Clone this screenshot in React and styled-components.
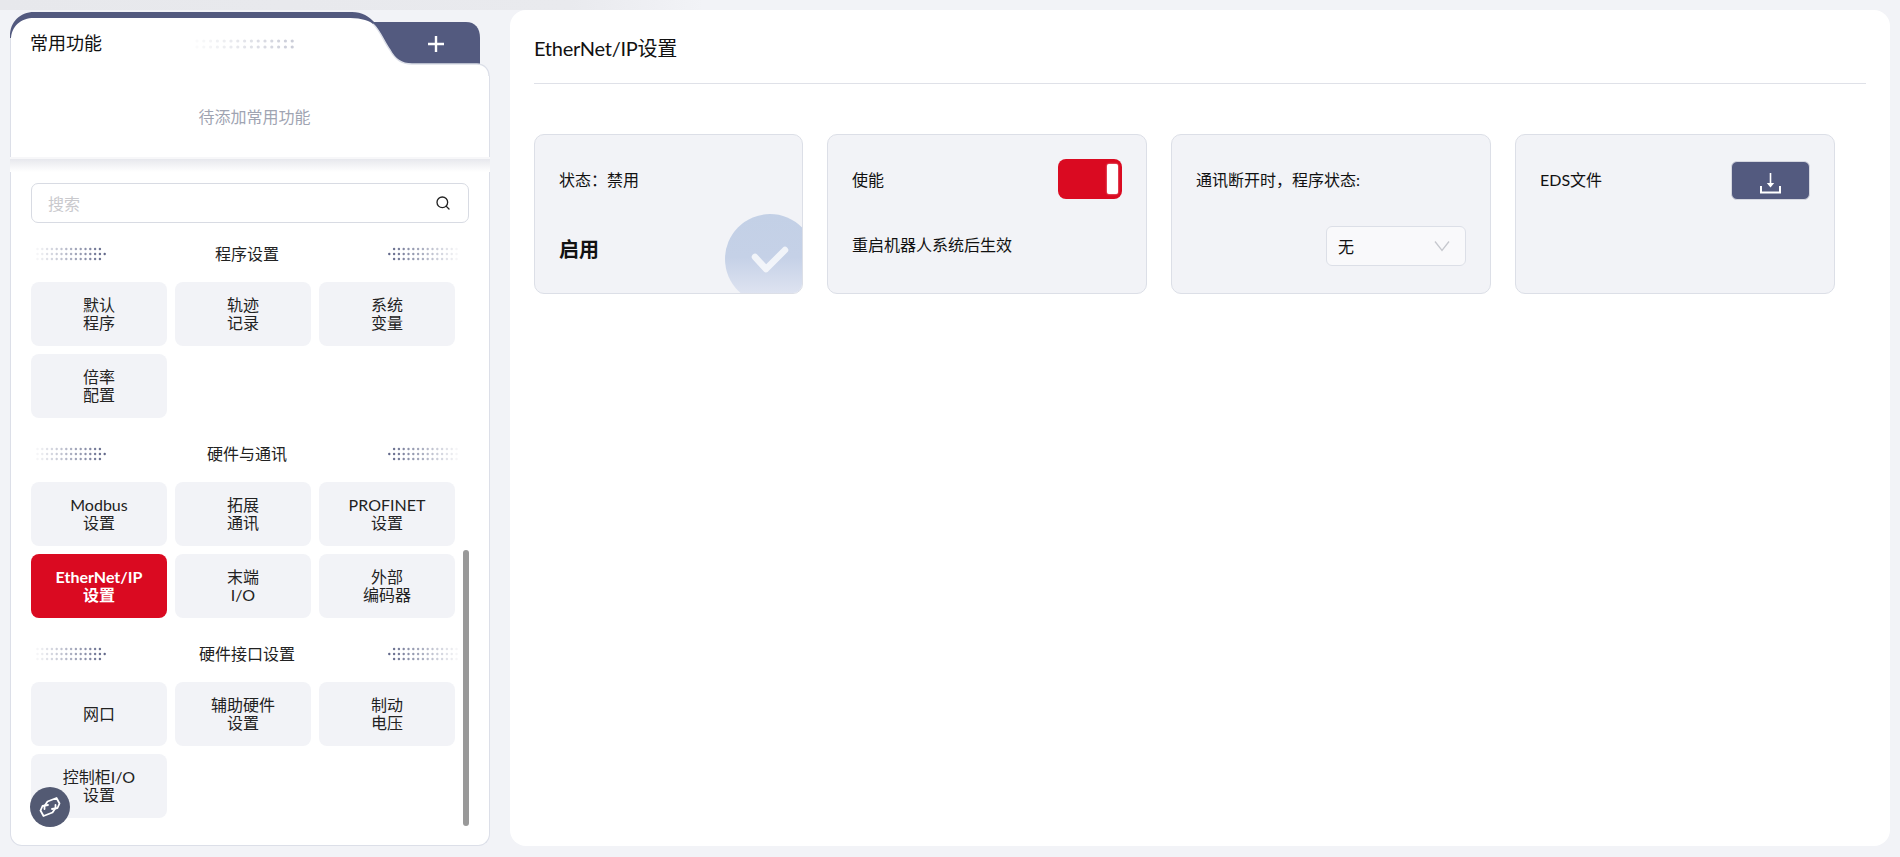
import React from "react";
import styled, { createGlobalStyle } from "styled-components";
import { Search } from "lucide-react";

const GlobalStyle = createGlobalStyle`
  html, body { margin: 0; padding: 0; background: #f2f3f7; }
  body { font-family: Lato, "Noto Sans CJK SC", sans-serif; color: #1b1b1f; }
  * { box-sizing: border-box; }
`;

const sections = [
  {
    title: "程序设置",
    items: [["默认", "程序"], ["轨迹", "记录"], ["系统", "变量"], ["倍率", "配置"]],
  },
  {
    title: "硬件与通讯",
    items: [
      ["Modbus", "设置"],
      ["拓展", "通讯"],
      ["PROFINET", "设置"],
      ["EtherNet/IP", "设置"],
      ["末端", "I/O"],
      ["外部", "编码器"],
    ],
  },
  {
    title: "硬件接口设置",
    items: [["网口"], ["辅助硬件", "设置"], ["制动", "电压"], ["控制柜I/O", "设置"]],
  },
];

const DotStrip = ({ mirror }) => {
  const dots = [];
  [250, 255, 260].forEach((y, row) => {
    const cols = row === 1 ? 15 : 14;
    for (let i = 0; i < cols; i++) {
      dots.push(
        <circle key={row + "-" + i} cx={1.5 + i * 4.8} cy={y - 248} r="1.2" fill="#535a7f" opacity={0.06 + (i / 14) * 0.85} />
      );
    }
  });
  return (
    <DotSvg $mirror={mirror} width="70" height="14" viewBox="0 0 70 14">
      {dots}
    </DotSvg>
  );
};

const TabDots = () => {
  const dots = [];
  [3, 9].forEach((y, row) => {
    for (let i = 0; i < 15; i++) {
      dots.push(<circle key={row + "-" + i} cx={2 + i * 6.8} cy={y} r="1.6" fill="#535a7f" opacity={0.03 + (i / 14) * 0.27} />);
    }
  });
  return (
    <TabDotSvg width="100" height="12" viewBox="0 0 100 12">
      {dots}
    </TabDotSvg>
  );
};

const TabShape = () => (
  <TabSvg width="480" height="64" viewBox="0 0 480 64">
    <path d="M350 10H456C465 10 470 16 470 26V56H350Z" fill="#535a7f" />
    <path d="M0 64V24C0 10 10 0 24 0H342C352 0 359 4 366 12L380 40H20Z" fill="#535a7f" />
    <path
      d="M1 64V28C1 14 11 6 24 6H336C348 6 357 7 363 12C370 18 374 30 380 38C385 47 391 52 402 52H467C474 52 479 57 479 64Z"
      fill="#fff"
    />
    <path
      d="M363 12C370 18 374 30 380 38C385 47 391 52 402 52H467C474 52 479 57 479 64"
      fill="none"
      stroke="#dcdfe8"
      strokeWidth="1.4"
    />
    <path d="M0.5 26V64" stroke="#dcdfe8" />
  </TabSvg>
);

const SectionBlock = ({ section }) => (
  <Section>
    <SectionHead>
      <DotStrip />
      <SectionTitle>{section.title}</SectionTitle>
      <DotStrip mirror />
    </SectionHead>
    <ButtonGrid>
      {section.items.map((lines) => (
        <NavButton key={lines.join("")} $active={lines[0] === "EtherNet/IP"}>
          {lines.map((line) => (
            <span key={line}>{line}</span>
          ))}
        </NavButton>
      ))}
    </ButtonGrid>
  </Section>
);

export default function App() {
  return (
    <>
      <GlobalStyle />
      <TopStrip />
      <Page>
        <Sidebar>
          <TabHeader>
            <TabShape />
            <TabLabel>常用功能</TabLabel>
            <TabDots />
            <AddButton>
              <svg width="18" height="18" viewBox="0 0 18 18">
                <path d="M9 1V17M1 9H17" stroke="#fff" strokeWidth="2.4" />
              </svg>
            </AddButton>
          </TabHeader>
          <FavBody>待添加常用功能</FavBody>
          <Shade />
          <SearchBox>
            <SearchHint>搜索</SearchHint>
            <Search size={16} color="#222" strokeWidth={2} />
          </SearchBox>
          {sections.map((s) => (
            <SectionBlock key={s.title} section={s} />
          ))}
          <ScrollThumb />
          <RoundButton>
            <svg width="24" height="24" viewBox="0 0 24 24" fill="none" stroke="#fff" strokeWidth="1.8" strokeLinejoin="round" strokeLinecap="round">
              <path d="M6.5 14V11L9.5 6.5L18.5 3L21.5 8.5L19.5 13L14 14" />
              <path d="M17.5 10V13L14.5 17.5L5.5 21L2.5 15.5L4.5 11L10 10" />
            </svg>
          </RoundButton>
        </Sidebar>
        <Main>
          <PageTitle>EtherNet/IP设置</PageTitle>
          <Cards>
            <Card $width={269}>
              <CardRow>
                <span>状态：禁用</span>
              </CardRow>
              <BigStatus>启用</BigStatus>
              <StatusBadge>
                <svg width="38" height="30" viewBox="0 0 38 30">
                  <path d="M4 12L15 24L34 5" fill="none" stroke="#fff" strokeOpacity="0.75" strokeWidth="6.5" strokeLinecap="round" strokeLinejoin="round" />
                </svg>
              </StatusBadge>
            </Card>
            <Card>
              <CardRow>
                <span>使能</span>
                <Toggle>
                  <Knob />
                </Toggle>
              </CardRow>
              <CardNote>重启机器人系统后生效</CardNote>
            </Card>
            <Card>
              <CardRow>
                <span>通讯断开时，程序状态:</span>
              </CardRow>
              <SelectRow>
                <SelectBox>
                  <span>无</span>
                  <svg width="16" height="12" viewBox="0 0 16 12">
                    <path d="M1 1.5L8 10.5L15 1.5" fill="none" stroke="#c6c8ce" strokeWidth="1.3" />
                  </svg>
                </SelectBox>
              </SelectRow>
            </Card>
            <Card>
              <CardRow>
                <span>EDS文件</span>
                <DownloadButton>
                  <svg width="21" height="21" viewBox="0 0 21 21" fill="none">
                    <path d="M10.5 0V11" stroke="#fff" strokeWidth="1.6" />
                    <path d="M6.8 10H14.2L10.5 14.5Z" fill="#fff" />
                    <path d="M1 13V19.5H20V13" stroke="#fff" strokeWidth="2" />
                  </svg>
                </DownloadButton>
              </CardRow>
            </Card>
          </Cards>
        </Main>
      </Page>
    </>
  );
}

const TopStrip = styled.div`
  height: 10px;
  background: linear-gradient(90deg, #e7e8ec 0%, #e9eaee 30%, #f2f3f7 37%);
`;

const Page = styled.div`
  display: flex;
  align-items: flex-start;
  gap: 20px;
  padding: 0 10px;
  height: 846px;
  overflow: hidden;
`;

const Sidebar = styled.aside`
  position: relative;
  flex: 0 0 480px;
  height: 834px;
  margin-top: 2px;
  display: flex;
  flex-direction: column;
  background: #fff;
  border-radius: 14px 12px 12px 12px;
  background-clip: padding-box;
  border: 1px solid #dcdfe8;
  border-top: none;
`;

const TabHeader = styled.div`
  position: relative;
  flex: 0 0 64px;
  margin: 0 -1px;
  padding: 10px 45px 12px 20px;
  display: flex;
  align-items: center;
  background: #f2f3f7;
`;

const TabSvg = styled.svg`
  position: absolute;
  left: 0;
  top: 0;
`;

const TabLabel = styled.div`
  position: relative;
  font-size: 18px;
  line-height: 24px;
  color: #111;
`;

const TabDotSvg = styled.svg`
  position: relative;
  margin-left: 93px;
  margin-top: 2px;
`;

const AddButton = styled.div`
  position: relative;
  margin-left: auto;
  display: flex;
  margin-top: 2px;
`;

const FavBody = styled.div`
  flex: 0 0 81px;
  padding: 0 0 1px 9px;
  display: flex;
  align-items: center;
  justify-content: center;
  font-size: 16px;
  color: #a0a4b2;
`;

const Shade = styled.div`
  flex: 0 0 15px;
  margin: 0 -1px;
  border-top: 2px solid #f7f7f9;
  background: linear-gradient(180deg, #e7e8ed 0%, #fff 100%);
`;

const SearchBox = styled.div`
  flex: 0 0 40px;
  width: 438px;
  margin: 11px 0 0 20px;
  padding: 0 17px 0 16px;
  display: flex;
  align-items: center;
  justify-content: space-between;
  border: 1px solid #d8dbe3;
  border-radius: 7px;
`;

const SearchHint = styled.span`
  font-size: 16px;
  color: #c9c9cd;
`;

const Section = styled.section`
  margin: 24px 0 0 20px;
  &:first-of-type {
    margin-top: 19px;
  }
`;

const SectionHead = styled.div`
  width: 432px;
  height: 24px;
  padding: 0 5px;
  display: flex;
  align-items: center;
  justify-content: space-between;
`;

const DotSvg = styled.svg`
  transform: ${(p) => (p.$mirror ? "scaleX(-1)" : "none")};
`;

const SectionTitle = styled.div`
  font-size: 16px;
  line-height: 24px;
  color: #222;
`;

const ButtonGrid = styled.div`
  margin-top: 16px;
  display: grid;
  grid-template-columns: repeat(3, 136px);
  grid-auto-rows: 64px;
  gap: 8px;
`;

const NavButton = styled.div`
  display: flex;
  flex-direction: column;
  align-items: center;
  justify-content: center;
  border-radius: 8px;
  font-size: 16px;
  line-height: 18px;
  background: ${(p) => (p.$active ? "#da0a21" : "#f2f3f7")};
  color: ${(p) => (p.$active ? "#fff" : "#222")};
  font-weight: ${(p) => (p.$active ? 700 : 400)};
`;

const ScrollThumb = styled.div`
  position: absolute;
  left: 452px;
  top: 538px;
  width: 6px;
  height: 276px;
  border-radius: 3px;
  background: #999;
`;

const RoundButton = styled.div`
  position: absolute;
  left: 19px;
  top: 775px;
  width: 40px;
  height: 40px;
  border-radius: 50%;
  background: #535a73;
  display: flex;
  align-items: center;
  justify-content: center;
`;

const Main = styled.main`
  flex: 1;
  height: 836px;
  padding: 0 24px 0 24px;
  background: #fff;
  border-radius: 16px;
`;

const PageTitle = styled.h1`
  margin: 0;
  height: 74px;
  padding-top: 24px;
  font-size: 20px;
  line-height: 28px;
  font-weight: 400;
  letter-spacing: -0.25px;
  color: #111;
  border-bottom: 1px solid #dfe1e8;
`;

const Cards = styled.div`
  margin-top: 50px;
  display: flex;
  gap: 24px;
`;

const Card = styled.div`
  position: relative;
  overflow: hidden;
  flex: 0 0 ${(p) => p.$width || 320}px;
  height: 160px;
  padding: 24px 24px 0 24px;
  background: #f2f3f7;
  border: 1px solid #dcdfe7;
  border-radius: 10px;
  font-size: 16px;
`;

const CardRow = styled.div`
  height: 40px;
  display: flex;
  align-items: center;
  justify-content: space-between;
  color: #111;
`;

const BigStatus = styled.div`
  margin-top: 36px;
  font-size: 20px;
  line-height: 28px;
  font-weight: 700;
  color: #111;
`;

const StatusBadge = styled.div`
  position: absolute;
  left: 190px;
  top: 79px;
  width: 90px;
  height: 90px;
  border-radius: 50%;
  padding-top: 31px;
  padding-left: 26px;
  background: linear-gradient(180deg, #c3d0e6 0%, #c5d1e7 48%, #e2e6f2 95%);
`;

const Toggle = styled.div`
  width: 64px;
  height: 40px;
  padding: 5px 4px 5px 5px;
  display: flex;
  justify-content: flex-end;
  background: #da0a21;
  border-radius: 8px;
`;

const Knob = styled.div`
  width: 11px;
  height: 30px;
  background: #fff;
  border-radius: 2px;
  box-shadow: 0 0 2px rgba(255, 255, 255, 0.8);
`;

const CardNote = styled.div`
  margin-top: 34px;
  line-height: 24px;
  color: #111;
`;

const SelectRow = styled.div`
  margin-top: 27px;
  display: flex;
  justify-content: flex-end;
`;

const SelectBox = styled.div`
  width: 140px;
  height: 40px;
  padding: 0 15px 0 11px;
  display: flex;
  align-items: center;
  justify-content: space-between;
  background: #f9f9fb;
  border: 1px solid #dcdfe7;
  border-radius: 6px;
  color: #111;
`;

const DownloadButton = styled.div`
  width: 79px;
  height: 39px;
  margin-top: 2px;
  padding-top: 6px;
  display: flex;
  align-items: center;
  justify-content: center;
  background: #535a7f;
  border: 1px solid #d5d7e0;
  border-radius: 6px;
`;
